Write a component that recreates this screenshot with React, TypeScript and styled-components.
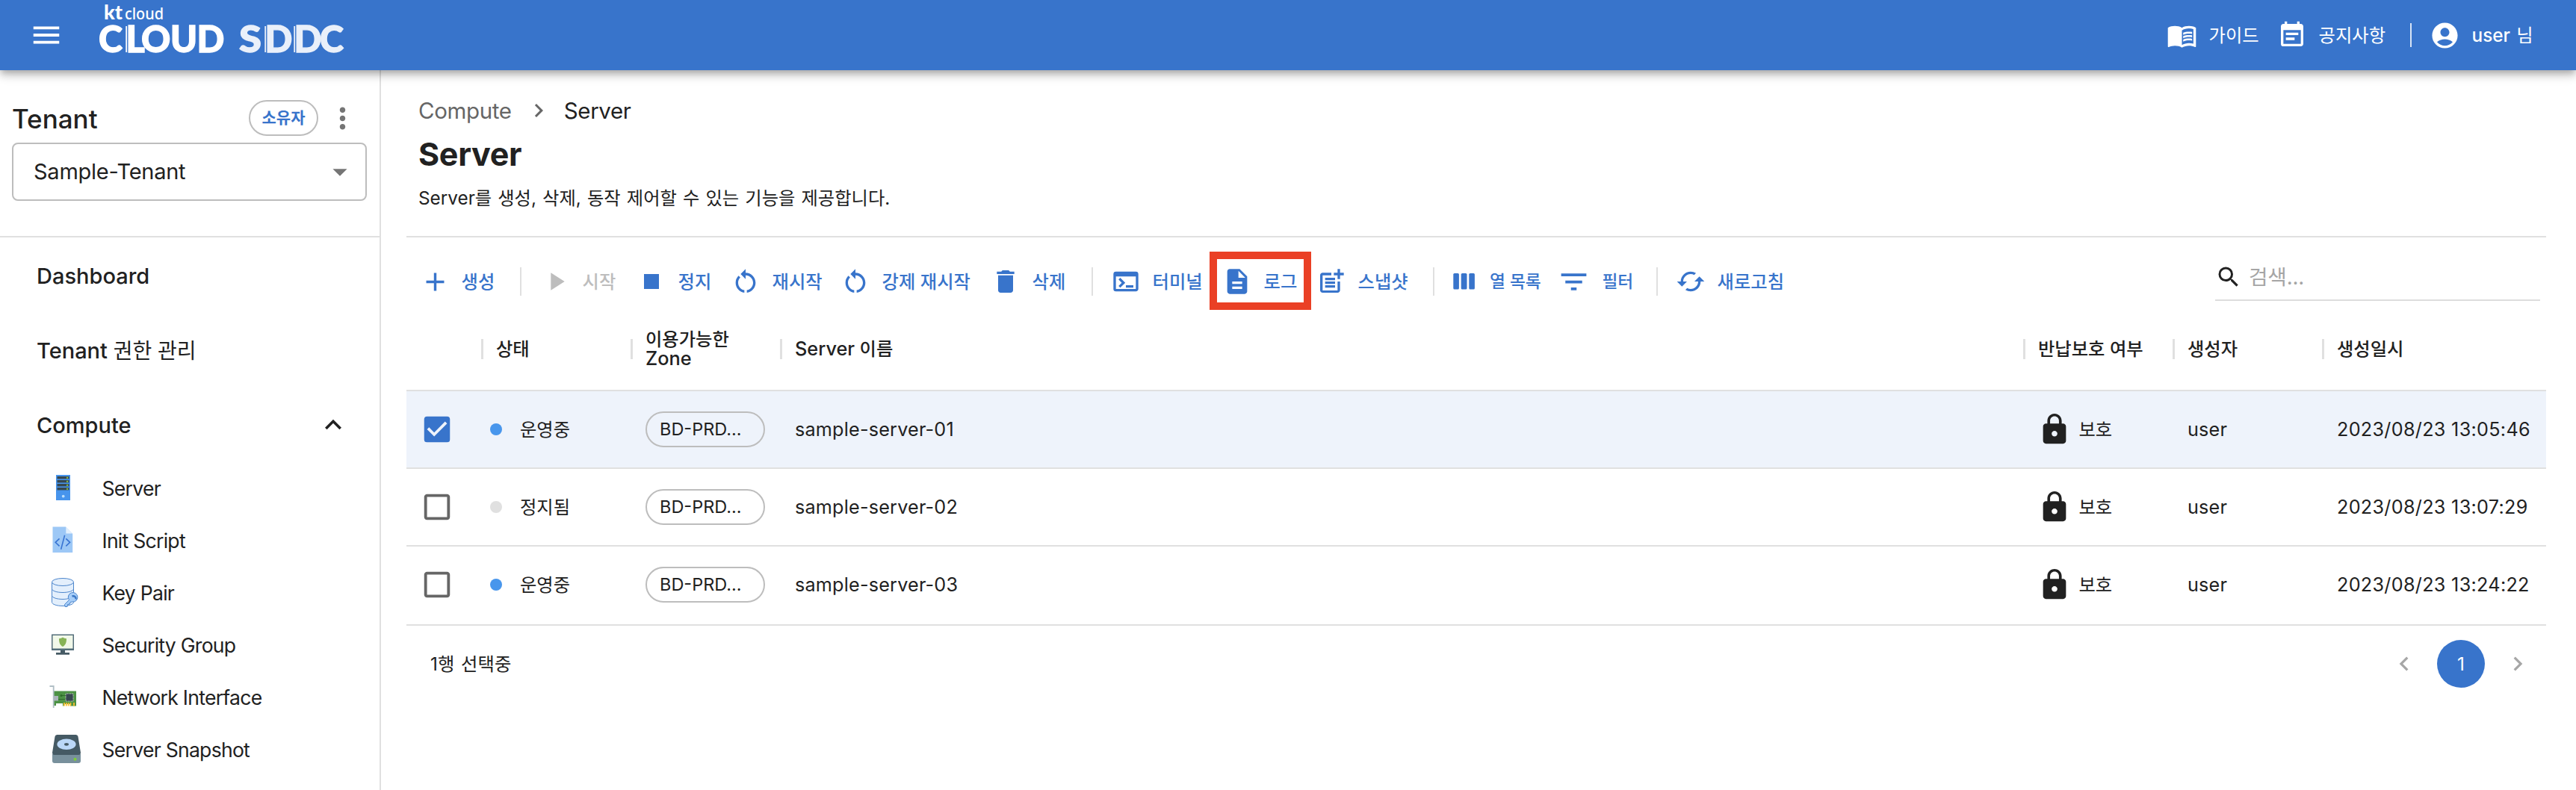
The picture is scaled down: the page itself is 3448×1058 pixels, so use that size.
import React from "react";
import styled, { createGlobalStyle } from "styled-components";
import {
  MdMenu, MdMenuBook, MdEventNote, MdAccountCircle, MdMoreVert, MdArrowDropDown,
  MdKeyboardArrowUp, MdNavigateNext, MdNavigateBefore, MdAdd, MdPlayArrow, MdStop,
  MdRestartAlt, MdDelete, MdTerminal, MdDescription, MdPostAdd, MdFilterList, MdCached,
  MdSearch, MdLock, MdCheckBox, MdCheckBoxOutlineBlank,
} from "react-icons/md";

const c = {
  blue: "#3874cb",
  text: "#212121",
  sub: "#666666",
  line: "#e0e0e0",
  border: "#bdbdbd",
  dot: "#4896ec",
};

const Global = createGlobalStyle`
  * { box-sizing: border-box; }
  html, body { margin: 0; background: #fff; overflow: hidden; }
  body {
    font-family: Inter, "Noto Sans CJK KR", sans-serif;
    color: ${c.text};
    font-size: 24.3px;
    line-height: 32px;
    white-space: nowrap;
  }
  svg { display: block; flex: none; }
`;

const Page = styled.div`
  display: flex;
  flex-direction: column;
  height: 1058px;
`;

const Header = styled.header`
  position: relative;
  z-index: 2;
  flex: none;
  display: flex;
  align-items: center;
  height: 94px;
  padding-left: 39px;
  background: ${c.blue};
  color: #fff;
  box-shadow: 0 4px 8px -2px rgba(0, 0, 0, 0.2), 0 8px 10px rgba(0, 0, 0, 0.14),
    0 2px 20px rgba(0, 0, 0, 0.12);
`;

const LogoArt = styled.svg`
  margin-left: 45px;
`;

const HeaderNav = styled.nav`
  display: flex;
  align-items: center;
  width: 548px;
  margin-left: auto;
`;

const HeaderItem = styled.div<{ $width?: number }>`
  display: flex;
  align-items: center;
  gap: 15.6px;
  width: ${(p) => (p.$width ? `${p.$width}px` : "auto")};
  word-spacing: 1.5px;
`;

const UserName = styled.span`
  font-weight: 500;
`;

const HeaderRule = styled.div`
  width: 2px;
  height: 32px;
  margin-right: 24px;
  background: #d7e3f5;
`;

const Body = styled.div`
  display: flex;
  flex: 1;
  min-height: 0;
`;

const Sidebar = styled.aside`
  flex: none;
  width: 510px;
  border-right: 2px solid ${c.line};
`;

const TenantPanel = styled.section`
  height: 224px;
  padding: 36px 17px 0 16px;
  border-bottom: 2px solid ${c.line};
`;

const TenantHead = styled.div`
  display: flex;
  align-items: center;
  height: 56px;
`;

const TenantTitle = styled.h2`
  flex: 1;
  margin: 2px 0 0;
  font-size: 35px;
  font-weight: 500;
`;

const RoleChip = styled.span`
  display: flex;
  align-items: center;
  justify-content: center;
  width: 93px;
  height: 48px;
  margin-right: 10px;
  border: 2px solid ${c.border};
  border-radius: 24px;
  color: ${c.blue};
  font-size: 21px;
  font-weight: 700;
`;

const MoreButton = styled.span`
  margin-right: 10px;
  color: #757575;
`;

const TenantSelect = styled.div`
  display: flex;
  align-items: center;
  justify-content: space-between;
  height: 78px;
  margin-top: 5px;
  padding: 0 11px 0 27px;
  border: 2px solid ${c.border};
  border-radius: 8px;
  font-size: 29px;
  letter-spacing: -0.25px;
  svg { color: #757575; }
`;

const Menu = styled.nav`
  display: flex;
  flex-direction: column;
`;

const MenuItem = styled.div`
  display: flex;
  align-items: center;
  justify-content: space-between;
  height: 100px;
  padding: 4px 40px 0 49px;
  font-size: 29px;
  font-weight: 500;
  svg { margin-bottom: 3px; }
`;

const MenuHangul = styled.span`
  font-size: 28px;
  font-weight: 400;
`;

const SubItem = styled.div`
  display: flex;
  align-items: center;
  gap: 24.5px;
  height: 70px;
  padding-left: 64px;
  font-size: 26.6px;
  letter-spacing: -0.75px;
  span { padding-top: 1px; }
`;

const Main = styled.main`
  flex: 1;
  min-width: 0;
  padding: 32px 40px 0 34px;
`;

const Breadcrumb = styled.div`
  display: flex;
  align-items: center;
  height: 44px;
  padding-left: 16px;
  font-size: 29.5px;
  letter-spacing: -0.35px;
  svg { margin: 0 16px 0 18px; color: ${c.sub}; }
`;

const Crumb = styled.span<{ $current?: boolean }>`
  color: ${(p) => (p.$current ? c.text : c.sub)};
`;

const Title = styled.h1`
  margin: 0;
  padding-left: 16px;
  font-size: 43px;
  font-weight: 700;
  letter-spacing: -0.3px;
  line-height: 73px;
`;

const Description = styled.p`
  margin: 0;
  height: 75px;
  padding-left: 16px;
  line-height: 44px;
  word-spacing: 1.3px;
  border-bottom: 2px solid ${c.line};
`;

const Toolbar = styled.div`
  display: flex;
  align-items: center;
  height: 118px;
  padding-left: 18px;
`;

const Tool = styled.div<{ $width: number; $disabled?: boolean; $gap?: number; $size?: number }>`
  position: relative;
  display: flex;
  align-items: center;
  gap: ${(p) => p.$gap ?? 15.6}px;
  width: ${(p) => p.$width}px;
  color: ${(p) => (p.$disabled ? c.border : c.blue)};
  font-size: ${(p) => p.$size ?? 24.3}px;
  font-weight: 500;
`;

const ToolIcon = styled.span`
  display: flex;
  justify-content: center;
  width: 40px;
`;

const ToolRule = styled.div<{ $after: number }>`
  width: 2px;
  height: 38px;
  margin-right: ${(p) => p.$after}px;
  background: ${c.line};
`;

const Highlight = styled.span`
  position: absolute;
  left: -17px;
  top: -20px;
  width: 136px;
  height: 78px;
  border: 10px solid #ea4025;
`;

const Search = styled.div`
  align-self: flex-start;
  display: flex;
  align-items: center;
  gap: 9px;
  width: 435px;
  height: 62px;
  margin: 23px 8px 0 auto;
  border-bottom: 2px solid #dddddd;
  color: #a5a5a5;
  font-size: 27.8px;
  letter-spacing: -0.2px;
  svg { color: ${c.text}; }
`;

const columns = "100px 200px 200px 1fr 200px 200px 300px";

const TableHead = styled.div`
  display: grid;
  grid-template-columns: ${columns};
  align-items: center;
  height: 88px;
  padding-bottom: 24px;
  border-bottom: 2px solid ${c.line};
  font-weight: 500;
`;

const HeadCell = styled.div`
  display: flex;
  align-items: center;
  line-height: 25px;
  &::before {
    content: "";
    width: 3px;
    height: 27px;
    margin-right: 17px;
    background: ${c.line};
  }
`;

const HeadLatin = styled.span`
  font-size: 25.3px;
`;

const Row = styled.div<{ $selected?: boolean }>`
  display: grid;
  grid-template-columns: ${columns};
  align-items: center;
  height: 104px;
  border-bottom: 2px solid ${c.line};
  background: ${(p) => (p.$selected ? "#eef3fb" : "#fff")};
  &:last-child { height: 106px; padding-bottom: 2px; }
`;

const Cell = styled.div<{ $pad?: number; $gap?: number; $spacing?: number }>`
  display: flex;
  align-items: center;
  gap: ${(p) => p.$gap ?? 0}px;
  padding-left: ${(p) => p.$pad ?? 20}px;
  ${(p) => p.$spacing && `font-size: 25.2px; letter-spacing: ${p.$spacing}px;`}
`;

const Check = styled.span<{ $on?: boolean }>`
  color: ${(p) => (p.$on ? c.blue : c.sub)};
`;

const StatusDot = styled.span<{ $running: boolean }>`
  width: 16px;
  height: 16px;
  border-radius: 50%;
  background: ${(p) => (p.$running ? c.dot : c.line)};
`;

const ZoneChip = styled.span`
  display: flex;
  align-items: center;
  width: 160px;
  height: 48px;
  padding-left: 17px;
  border: 2px solid ${c.border};
  border-radius: 24px;
  font-size: 23.5px;
`;

const Footer = styled.div`
  display: flex;
  align-items: center;
  justify-content: space-between;
  height: 102px;
  padding: 0 19px 0 32px;
  word-spacing: 1.3px;
  letter-spacing: 0.2px;
`;

const Pager = styled.div`
  display: flex;
  align-items: center;
  gap: 25px;
  color: #a6a6a6;
`;

const PageNumber = styled.span`
  display: flex;
  align-items: center;
  justify-content: center;
  width: 64px;
  height: 64px;
  border-radius: 50%;
  background: ${c.blue};
  color: #fff;
`;

const LogoWord = styled.text`
  font-family: Lato, sans-serif;
  font-weight: 900;
  font-size: 48.5px;
  stroke-width: 1.3px;
`;

const Logo = () => (
  <LogoArt width="340" height="94" viewBox="130 0 340 94" fill="#fff">
    <text x="139" y="26" fontFamily="Lato, sans-serif" fontWeight="900" fontSize="26" textLength="25" lengthAdjust="spacingAndGlyphs">kt</text>
    <text x="167" y="26" fontFamily="Noto Sans, sans-serif" fontWeight="500" fontSize="21" textLength="52" lengthAdjust="spacingAndGlyphs">cloud</text>
    <LogoWord x="132 168.500 189 228 263.500" y="70" stroke="#fff">CLOUD</LogoWord>
    <g fill="#eaf0fa" stroke="#eaf0fa">
      <LogoWord x="320" y="70" textLength="30" lengthAdjust="spacingAndGlyphs">S</LogoWord>
      <LogoWord x="354.500 393.500 428" y="70">DDC</LogoWord>
    </g>
    <path d="M169.200 35V70" stroke="#fff" strokeWidth="1.8" />
    <path d="M355.200 35V70M394.200 35V70" stroke="#eaf0fa" strokeWidth="1.8" />
  </LogoArt>
);

const ColumnsIcon = () => (
  <svg width="40" height="40" viewBox="0 0 40 40" fill="currentColor">
    <rect x="5.3" y="9" width="7.6" height="21.6" rx="1.6" />
    <rect x="15.7" y="9" width="7.8" height="21.6" rx="1.6" />
    <rect x="26.3" y="9" width="7.6" height="21.6" rx="1.6" />
  </svg>
);

const ServerIcon = () => (
  <svg width="48" height="48">
    <rect x="11" y="7" width="19" height="34" fill="#4794ec" />
    {[9, 14, 19, 24].map((y) => (
      <g key={y}>
        <rect x="12.5" y={y} width="16" height="3.4" fill="#37474f" />
        <rect x="25" y={y + 0.8} width="2" height="2" fill="#8bc34a" />
      </g>
    ))}
    <circle cx="20.7" cy="35.6" r="1.9" fill="#bbdefb" />
  </svg>
);

const ScriptIcon = () => (
  <svg width="48" height="48">
    <path d="M6.5 6.5H24l9.2 9.3V41H6.5z" fill="#9dc8f6" />
    <path d="M24.3 6.8v8.7h8.7z" fill="#e3f0fd" />
    <path d="M15.5 22.3l-5.3 5 5.3 5M24.3 22.3l5.3 5-5.3 5M22.6 17.8l-5 19" fill="none" stroke="#3874d2" strokeWidth="1.6" />
  </svg>
);

const KeyPairIcon = () => (
  <svg width="48" height="48" stroke="#4d86cc" strokeWidth="1">
    <path d="M5.5 10.5v27c0 2.8 6.5 5 14.5 5s14.5-2.2 14.5-5v-27" fill="#e3effc" />
    <ellipse cx="20" cy="10.5" rx="14.5" ry="5" fill="#e3effc" />
    <path d="M5.5 19.5c0 2.8 6.5 5 14.5 5s14.5-2.2 14.5-5M5.5 28.5c0 2.8 6.5 5 14.5 5 3 0 5-.3 7-.8" fill="none" />
    <path d="M28.5 34.5l-6 6 .5 3h3l.5-3 3-.5.5-2.5 2.5-.5a6.3 6.3 0 1 0-4-2.5z" fill="#a6cdf8" />
    <path d="M32.5 29.5c3-1 5.5 1 5 4" fill="none" stroke="#3b78c6" strokeWidth="2.4" />
  </svg>
);

const SecurityIcon = () => (
  <svg width="48" height="48">
    <path d="M17 31h6v5h-6zM11 35h18v2.7H11z" fill="#455a64" />
    <rect x="5" y="10.5" width="30" height="21.5" fill="#546e7a" />
    <rect x="6.5" y="12" width="27" height="17.5" fill="#f1f8e9" />
    <path d="M20 14.5c1.5 1.2 3.2 1.6 5 1.7 0 5-1 8.5-5 10.8-4-2.3-5-5.8-5-10.8 1.8-.1 3.5-.5 5-1.7z" fill="#87b357" />
  </svg>
);

const NetworkIcon = () => (
  <svg width="48" height="48">
    <path d="M8 16.5h30v20H30V34h-9v2.5h-1V33H11v3H8z" fill="#4c9244" />
    <path d="M2.5 10h5.2v29" fill="none" stroke="#b0bec5" strokeWidth="1.8" />
    <path d="M8 23h6v6.5H8z" fill="#aab4ba" />
    <path d="M14 27.5h10M17 22.5h7" stroke="#2e6b2a" strokeWidth="1.2" />
    <circle cx="18" cy="22.5" r="1.5" fill="#2e6b2a" />
    <rect x="24" y="20" width="10" height="10" fill="#37474f" stroke="#e0e0e0" strokeWidth="1" strokeDasharray="1 1" />
    <path d="M22 32v4.5M24.8 32v4.5M27.6 32v4.5M30.4 32v4.5M35 32v4.5" stroke="#fbc02d" strokeWidth="1.8" />
  </svg>
);

const SnapshotIcon = () => (
  <svg width="48" height="48">
    <path d="M6 31h38v9a3 3 0 0 1-3 3H9a3 3 0 0 1-3-3z" fill="#78909c" />
    <path d="M12.5 5h25a3 3 0 0 1 3 2.5L44 29a3 3 0 0 1-3 3H9a3 3 0 0 1-3-3l3.500-21.5a3 3 0 0 1 3-2.5z" fill="#455a64" />
    <ellipse cx="25" cy="17.8" rx="12.6" ry="7.3" fill="#bbd8f8" />
    <ellipse cx="25" cy="17.8" rx="3" ry="1.9" fill="#455a64" />
    <circle cx="36.5" cy="37.8" r="2.1" fill="#7ccc3a" />
  </svg>
);

const subItems = [
  { label: "Server", Icon: ServerIcon },
  { label: "Init Script", Icon: ScriptIcon },
  { label: "Key Pair", Icon: KeyPairIcon },
  { label: "Security Group", Icon: SecurityIcon },
  { label: "Network Interface", Icon: NetworkIcon },
  { label: "Server Snapshot", Icon: SnapshotIcon },
];

const servers = [
  { name: "sample-server-01", running: true, date: "2023/08/23 13:05:46", selected: true },
  { name: "sample-server-02", running: false, date: "2023/08/23 13:07:29", selected: false },
  { name: "sample-server-03", running: true, date: "2023/08/23 13:24:22", selected: false },
];

type ToolItemProps = {
  icon: React.ReactNode;
  label: string;
  width: number;
  disabled?: boolean;
  marked?: boolean;
  gap?: number;
  size?: number;
};

const ToolItem = ({ icon, label, width, disabled, marked, gap, size }: ToolItemProps) => (
  <Tool $width={width} $disabled={disabled} $gap={gap} $size={size}>
    <ToolIcon>{icon}</ToolIcon>
    <span>{label}</span>
    {marked && <Highlight />}
  </Tool>
);

export default function App() {
  return (
    <Page>
      <Global />
      <Header>
        <MdMenu size={46} />
        <Logo />
        <HeaderNav>
          <HeaderItem $width={148}><MdMenuBook size={41} /><span>가이드</span></HeaderItem>
          <HeaderItem $width={178}><MdEventNote size={40} /><span>공지사항</span></HeaderItem>
          <HeaderRule />
          <HeaderItem><MdAccountCircle size={41} /><span><UserName>user</UserName> 님</span></HeaderItem>
        </HeaderNav>
      </Header>
      <Body>
        <Sidebar>
          <TenantPanel>
            <TenantHead>
              <TenantTitle>Tenant</TenantTitle>
              <RoleChip>소유자</RoleChip>
              <MoreButton><MdMoreVert size={45} /></MoreButton>
            </TenantHead>
            <TenantSelect>
              <span>Sample-Tenant</span>
              <MdArrowDropDown size={46} />
            </TenantSelect>
          </TenantPanel>
          <Menu>
            <MenuItem>Dashboard</MenuItem>
            <MenuItem><span>Tenant <MenuHangul>권한 관리</MenuHangul></span></MenuItem>
            <MenuItem>Compute<MdKeyboardArrowUp size={44} /></MenuItem>
            {subItems.map(({ label, Icon }) => (
              <SubItem key={label}><Icon /><span>{label}</span></SubItem>
            ))}
          </Menu>
        </Sidebar>
        <Main>
          <Breadcrumb>
            <Crumb>Compute</Crumb>
            <MdNavigateNext size={36} />
            <Crumb $current>Server</Crumb>
          </Breadcrumb>
          <Title>Server</Title>
          <Description>Server를 생성, 삭제, 동작 제어할 수 있는 기능을 제공합니다.</Description>
          <Toolbar>
            <ToolItem icon={<MdAdd size={41} />} label="생성" width={134} />
            <ToolRule $after={26} />
            <ToolItem icon={<MdPlayArrow size={40} />} label="시작" width={128} disabled />
            <ToolItem icon={<MdStop size={40} />} label="정지" width={126} />
            <ToolItem icon={<MdRestartAlt size={40} />} label="재시작" width={147} />
            <ToolItem icon={<MdRestartAlt size={40} />} label="강제 재시작" width={201} />
            <ToolItem icon={<MdDelete size={40} />} label="삭제" width={135} />
            <ToolRule $after={24} />
            <ToolItem icon={<MdTerminal size={40} />} label="터미널" width={149} />
            <ToolItem icon={<MdDescription size={40} />} label="로그" width={126} marked />
            <ToolItem icon={<MdPostAdd size={40} />} label="스냅샷" width={156} />
            <ToolRule $after={20} />
            <ToolItem icon={<ColumnsIcon />} label="열 목록" width={146} gap={14} size={22.7} />
            <ToolItem icon={<MdFilterList size={45} />} label="필터" width={131} gap={18.5} size={22.7} />
            <ToolRule $after={24} />
            <ToolItem icon={<MdCached size={40} />} label="새로고침" width={160} />
            <Search><MdSearch size={36} /><span>검색...</span></Search>
          </Toolbar>
          <section>
            <TableHead>
              <span />
              <HeadCell><span>상태</span></HeadCell>
              <HeadCell><span>이용가능한<br /><HeadLatin>Zone</HeadLatin></span></HeadCell>
              <HeadCell><span><HeadLatin>Server</HeadLatin> 이름</span></HeadCell>
              <HeadCell><span>반납보호 여부</span></HeadCell>
              <HeadCell><span>생성자</span></HeadCell>
              <HeadCell><span>생성일시</span></HeadCell>
            </TableHead>
            <div>
              {servers.map((s) => (
                <Row key={s.name} $selected={s.selected}>
                  <Cell $pad={18}>
                    <Check $on={s.selected}>
                      {s.selected ? <MdCheckBox size={46} /> : <MdCheckBoxOutlineBlank size={46} />}
                    </Check>
                  </Cell>
                  <Cell $pad={12} $gap={24}>
                    <StatusDot $running={s.running} />
                    <span>{s.running ? "운영중" : "정지됨"}</span>
                  </Cell>
                  <Cell><ZoneChip>BD-PRD...</ZoneChip></Cell>
                  <Cell $spacing={0.2}><span>{s.name}</span></Cell>
                  <Cell $pad={19} $gap={9.5}><MdLock size={46} /><span>보호</span></Cell>
                  <Cell $spacing={0.2}><span>user</span></Cell>
                  <Cell $spacing={0.3}><span>{s.date}</span></Cell>
                </Row>
              ))}
            </div>
          </section>
          <Footer>
            <span>1행 선택중</span>
            <Pager>
              <MdNavigateBefore size={38} />
              <PageNumber>1</PageNumber>
              <MdNavigateNext size={38} />
            </Pager>
          </Footer>
        </Main>
      </Body>
    </Page>
  );
}
